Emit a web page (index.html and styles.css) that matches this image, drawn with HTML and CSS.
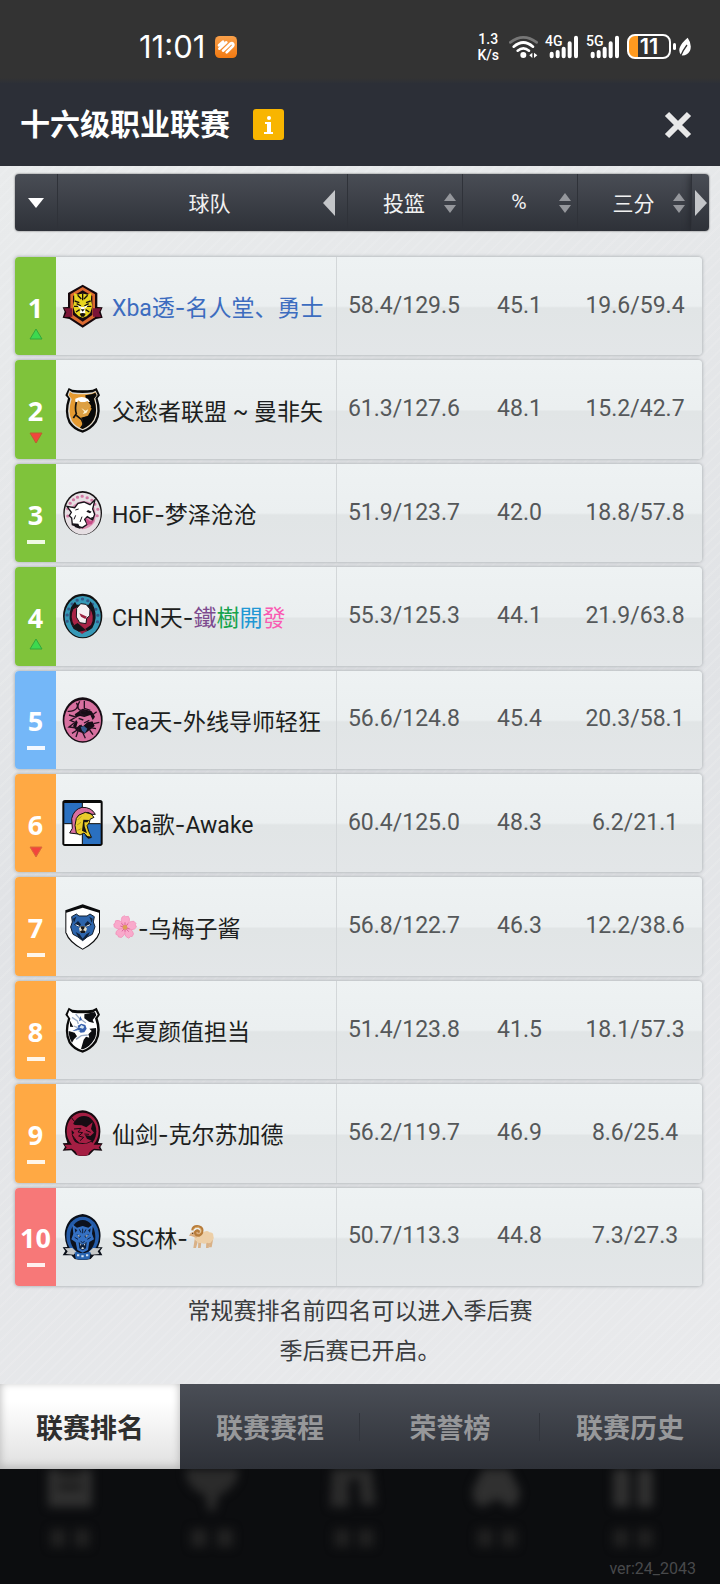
FILE: index.html
```html
<!DOCTYPE html>
<html lang="zh-CN">
<head>
    <meta charset="UTF-8">
    <meta name="viewport" content="width=device-width, initial-scale=1.0">
    <title>十六级职业联赛</title>
    <link rel="stylesheet" href="styles.css">
</head>
<body>
    <div class="status-bar">
        <div class="status-left">
            <span class="clock">11:01</span>
            <svg class="app-badge" width="22" height="22" viewBox="0 0 66 66" aria-hidden="true">
                <defs>
                    <linearGradient id="badge" x1="0" y1="0" x2="0" y2="1">
                        <stop offset="0" stop-color="#f9a04a"/>
                        <stop offset="1" stop-color="#f27a12"/>
                    </linearGradient>
                </defs>
                <rect width="66" height="66" rx="14" fill="url(#badge)"/>
                <path d="M12 28L24 17M13 38L34 19M24 44L43 26Q48 20 53 22Q57 26 53 31L35 49" fill="none" stroke="#fff" stroke-width="8" stroke-linecap="round" stroke-linejoin="round"/>
            </svg>
        </div>
        <div class="status-right">
            <span class="net-speed">1.3<br>K/s</span>
            <svg width="29" height="24" viewBox="0 0 87 72" aria-hidden="true">
                <g fill="none" stroke-linecap="round" stroke-width="8">
                    <path d="M4 22Q43-8 83 22" stroke="#777"/>
                    <path d="M14 35Q43 10 72 35" stroke="#fff"/>
                    <path d="M26 47Q43 33 60 47" stroke="#fff"/>
                </g>
                <circle cx="43" cy="60" r="9" fill="#fff"/>
                <path d="M70 53v16l-9-8zM75 53v16l10-8z" fill="#fff"/>
            </svg>
            <span class="signal">
                <span class="signal-type">4G</span>
                <svg width="34" height="24" viewBox="0 0 102 72" aria-hidden="true"><path d="M20 56v8M38 51v13M56 41v23M74 25v39M93 8v56" stroke="#fff" stroke-width="12" stroke-linecap="round"/></svg>
            </span>
            <span class="signal">
                <span class="signal-type">5G</span>
                <svg width="34" height="24" viewBox="0 0 102 72" aria-hidden="true"><path d="M20 56v8M38 51v13M56 41v23M74 25v39M93 8v56" stroke="#fff" stroke-width="12" stroke-linecap="round"/></svg>
            </span>
            <span class="battery">11</span>
            <svg width="14" height="20" viewBox="0 0 42 60" aria-hidden="true">
                <path d="M29 2Q43 22 36 41Q27 57 10 55Q0 43 6 30Q11 17 29 2Z" fill="#fff"/>
                <path d="M8 57Q16 38 27 24" stroke="#333" stroke-width="4" fill="none"/>
            </svg>
        </div>
    </div>

    <header class="title-bar">
        <h1>十六级职业联赛</h1>
        <button class="info-button" aria-label="联赛说明">
            <svg width="31" height="31" viewBox="0 0 31 31" aria-hidden="true">
                <rect width="31" height="31" rx="3" fill="#f8b500"/>
                <circle cx="16" cy="9" r="2" fill="#fff"/>
                <path d="M12 13h6v10h2v2h-9v-2h3v-8h-2z" fill="#fff"/>
            </svg>
        </button>
        <button class="close-button" aria-label="关闭">
            <svg width="28" height="28" viewBox="0 0 28 28" aria-hidden="true"><path d="M3 3L25 25M25 3L3 25" stroke="#e8e8e8" stroke-width="6"/></svg>
        </button>
    </header>

    <main>
        <table class="ranking">
            <thead>
                <tr>
                    <th class="col-rank"><button aria-label="按排名排序"><svg width="16" height="10" viewBox="0 0 16 10"><path d="M0 0h16l-8 10z" fill="#fff"/></svg></button></th>
                    <th class="col-team"><span>球队</span><button aria-label="向左"><svg width="12" height="26" viewBox="0 0 12 26"><path d="M12 0v26L0 13z" fill="#c4c6c9"/></svg></button></th>
                    <th class="col-sort"><span>投篮</span><button aria-label="按投篮排序"><svg width="12" height="20" viewBox="0 0 12 20"><path d="M0 8L6 0l6 8zM0 12h12l-6 8z" fill="#95979c"/></svg></button></th>
                    <th class="col-sort"><span>%</span><button aria-label="按命中率排序"><svg width="12" height="20" viewBox="0 0 12 20"><path d="M0 8L6 0l6 8zM0 12h12l-6 8z" fill="#95979c"/></svg></button></th>
                    <th class="col-sort"><span>三分</span><button aria-label="按三分排序"><svg width="12" height="20" viewBox="0 0 12 20"><path d="M0 8L6 0l6 8zM0 12h12l-6 8z" fill="#95979c"/></svg></button></th>
                    <th class="col-next"><button aria-label="向右"><svg width="12" height="26" viewBox="0 0 12 26"><path d="M0 0v26l12-13z" fill="#c4c6c9"/></svg></button></th>
                </tr>
            </thead>
            <tbody>
                <tr>
                    <td class="rank green"><b>1</b><svg class="move" viewBox="0 0 14 16"><path d="M7 2L13 12H1z" fill="#3dd84f" stroke="#35a63a"/></svg></td>
                    <td class="team mine">
                        <!-- tiger -->
                        <svg class="logo" viewBox="0 0 123 138" aria-hidden="true">
                            <path d="M62 5L106 30V72L122 73L116 86L122 104L102 108L62 134L22 108L2 104L8 86L2 73L18 72V30Z" fill="#15070c"/>
                            <path d="M62 12L99 34V103L62 127L25 103V34Z" fill="#dc6a31"/>
                            <path d="M62 22L91 39V96L62 116L33 96V39Z" fill="#170910"/>
                            <path d="M6 76H31V101L7 102L13 88ZM118 76H93V101L117 102L111 88Z" fill="#7c1537"/>
                            <path d="M36 30L48 35Q62 29 76 35L88 30L87 50L91 70L85 89L74 100L62 104L50 100L39 89L33 70L37 50Z" fill="#e8d51f"/>
                            <path d="M47 37L58 48M77 37L66 48M62 32V52M38 54L52 59M86 54L72 59M36 70L49 70M88 70L75 70M42 87L53 80M82 87L71 80M44 62L57 69M80 62L67 69" stroke="#17100c" stroke-width="4"/>
                            <path d="M45 66L58 71L54 76ZM79 66L66 71L70 76ZM57 72H67L70 89L62 94L54 89Z" fill="#fff"/>
                            <path d="M56 79H68L62 86ZM53 93Q62 87 71 93L66 101H58Z" fill="#17100c"/>
                        </svg>
                        <span>Xba透<span class="dash">-</span>名人堂、勇士</span>
                    </td>
                    <td class="fg">58.4/129.5</td><td class="pct">45.1</td><td class="three">19.6/59.4</td>
                </tr>
                <tr>
                    <td class="rank green"><b>2</b><svg class="move" viewBox="0 0 14 16"><path d="M1 3H13L7 13z" fill="#f2453d" stroke="#b9622f"/></svg></td>
                    <td class="team">
                        <!-- black and gold shield -->
                        <svg class="logo" viewBox="0 0 123 138" aria-hidden="true">
                            <path d="M20 3L31 8Q62 12 92 8L104 3L114 25L107 34Q121 74 104 106Q88 129 62 137Q34 130 20 108Q4 76 18 34L10 25Z" fill="#0a0a0a"/>
                            <path d="M22 10L31 16Q62 20 92 16L101 11L107 24L100 34Q113 75 98 101Q84 122 62 130Q39 123 26 104Q11 75 25 35L17 24Z" fill="#dcd9d2"/>
                            <path d="M24 15L33 20Q62 24 90 20L100 15L104 24L96 35Q109 73 95 98Q83 117 62 126Q41 119 30 102Q16 75 29 36L20 25Z" fill="#e59a31"/>
                            <path d="M70 25L91 21L100 17L104 25L96 35Q109 73 95 98Q83 117 62 126L54 122Q70 105 57 92L78 86L89 65L72 42Z" fill="#090909"/>
                            <path d="M40 35Q61 25 78 36L84 45L40 46Z" fill="#fff"/>
                            <path d="M48 40L60 48L77 42L88 58L78 66L83 77L65 90L47 83L40 65Z" fill="#dda044"/>
                            <path d="M43 45Q38 65 43 80L34 93M43 85L59 98L65 113L58 122" fill="none" stroke="#111" stroke-width="5"/>
                            <path d="M58 63L70 71L79 67L73 78L62 81L67 74Z" fill="#fff3d0"/>
                        </svg>
                        <span>父愁者联盟 ~ 曼非矢</span>
                    </td>
                    <td class="fg">61.3/127.6</td><td class="pct">48.1</td><td class="three">15.2/42.7</td>
                </tr>
                <tr>
                    <td class="rank green"><b>3</b><svg class="move wide" viewBox="0 0 20 16"><path d="M1 8H19" stroke="#effae2" stroke-width="4"/></svg></td>
                    <td class="team">
                        <!-- white wolf -->
                        <svg class="logo" viewBox="0 0 123 138" aria-hidden="true">
                            <ellipse cx="62" cy="69" rx="58" ry="66" fill="#151214"/>
                            <ellipse cx="62" cy="71" rx="54" ry="63" fill="#e6dfe3"/>
                            <path d="M24 40h1M34 29h1M46 22h1M60 19h1M75 23h1M89 31h1M98 43h1M17 56h1M17 78h1M105 77h1M107 58h1" stroke="#d27aa4" stroke-width="9" stroke-linecap="round"/>
                            <path d="M30 50Q60 20 92 42Q106 66 98 96Q84 116 62 118L30 104Z" fill="#dc8db2"/>
                            <path d="M15 49L38 53L48 40L66 36L84 44L99 29L92 57L98 73L92 90L76 80L68 88L76 103L61 113L31 104L29 84L22 77L28 67Z" fill="#fff" stroke="#17131a" stroke-width="4"/>
                            <path d="M30 100L49 101L56 117L40 112ZM78 60L89 65L84 70L73 65ZM86 83L95 80L91 91Z" fill="#17131a"/>
                            <path d="M40 60L50 57M41 76L36 88M60 80L54 96" fill="none" stroke="#17131a" stroke-width="3"/>
                            <path d="M71 83L84 94L96 91L89 103L75 104Z" fill="#c74c87"/>
                        </svg>
                        <span>HōF<span class="dash">-</span>梦泽沧沧</span>
                    </td>
                    <td class="fg">51.9/123.7</td><td class="pct">42.0</td><td class="three">18.8/57.8</td>
                </tr>
                <tr>
                    <td class="rank green"><b>4</b><svg class="move" viewBox="0 0 14 16"><path d="M7 2L13 12H1z" fill="#3dd84f" stroke="#35a63a"/></svg></td>
                    <td class="team">
                        <!-- masked knight -->
                        <svg class="logo" viewBox="0 0 123 138" aria-hidden="true">
                            <ellipse cx="62" cy="69" rx="59" ry="67" fill="#111"/>
                            <ellipse cx="62" cy="71" rx="54" ry="62" fill="#3799b7"/>
                            <path d="M20 48h1M30 33h1M45 22h1M61 18h1M77 23h1M91 34h1M101 49h1M15 66h1M15 85h1M107 67h1M106 86h1" stroke="#365a89" stroke-width="9" stroke-linecap="round"/>
                            <path d="M27 43L39 26L44 35L80 35L86 25L96 43Q108 77 91 105Q65 128 35 108Q15 80 27 43Z" fill="#141319"/>
                            <path d="M34 49L53 38L82 44Q100 69 87 96L65 111L38 99Q22 73 34 49Z" fill="#a92447"/>
                            <path d="M44 46L56 32L72 34L84 48L83 68L74 76L72 92L53 89L43 72Z" fill="#f6f0f2" stroke="#18131a" stroke-width="3"/>
                            <path d="M52 61L75 71L70 78L57 71Z" fill="#9b213f"/>
                            <path d="M31 98L56 93L75 113L60 123Z" fill="#9b213f"/>
                            <path d="M47 90L72 112L50 116L31 100Z" fill="#151319"/>
                        </svg>
                        <span>CHN天<span class="dash">-</span><i class="purple">鐵</i><i class="jade">樹</i><i class="azure">開</i><i class="pink">發</i></span>
                    </td>
                    <td class="fg">55.3/125.3</td><td class="pct">44.1</td><td class="three">21.9/63.8</td>
                </tr>
                <tr>
                    <td class="rank blue"><b>5</b><svg class="move wide" viewBox="0 0 20 16"><path d="M1 8H19" stroke="#f3f8ff" stroke-width="4"/></svg></td>
                    <td class="team">
                        <!-- pink dragon -->
                        <svg class="logo" viewBox="0 0 123 138" aria-hidden="true">
                            <ellipse cx="62" cy="69" rx="60" ry="68" fill="#160c14"/>
                            <ellipse cx="62" cy="71" rx="55" ry="62" fill="#d7709f"/>
                            <path d="M62 35L89 43L99 59L91 71L98 87L82 100L68 110L44 102L33 87L44 65L38 52Z" fill="#160d16"/>
                            <path d="M38 62L54 57L67 60L85 54L94 73L76 76L63 88L53 84L42 94L47 76Z" fill="#d7709f"/>
                            <path d="M17 43Q35 44 43 35Q50 26 43 18M53 13Q42 31 53 39L72 43M67 12V34L85 40M21 54L42 60L25 70L39 76L21 90L45 93M104 44L88 56M112 76L94 80M102 95L82 91M30 109L50 96L42 120M61 104L70 124M83 99L93 113" fill="none" stroke="#251020" stroke-width="4"/>
                            <path d="M50 64L64 69M66 78L82 70M48 91L59 84M58 40Q47 53 71 55" fill="none" stroke="#241222" stroke-width="4"/>
                            <path d="M56 90L66 87L76 95L69 109L60 101Z" fill="#36598d"/>
                        </svg>
                        <span>Tea天<span class="dash">-</span>外线导师轻狂</span>
                    </td>
                    <td class="fg">56.6/124.8</td><td class="pct">45.4</td><td class="three">20.3/58.1</td>
                </tr>
                <tr>
                    <td class="rank orange"><b>6</b><svg class="move" viewBox="0 0 14 16"><path d="M1 3H13L7 13z" fill="#f2453d" stroke="#d96c38"/></svg></td>
                    <td class="team">
                        <!-- spartan helmet -->
                        <svg class="logo" viewBox="0 0 123 138" aria-hidden="true">
                            <rect x="1" y="0" width="121" height="138" rx="8" fill="#090909"/>
                            <path d="M7 9H61V71H7ZM61 71H116V132H61Z" fill="#2a70c0"/>
                            <path d="M61 9H116V71H61ZM7 71H61V132H7Z" fill="#fff"/>
                            <path d="M7 71H116M61 9V132" stroke="#111" stroke-width="3"/>
                            <path d="M23 99L31 85L29 56Q35 28 60 22Q88 21 100 43L90 43L78 37L64 41L49 47L43 65L43 84L49 102Z" fill="#d86f9f" stroke="#151214" stroke-width="3"/>
                            <path d="M51 45L70 37L87 42L96 52L84 58L82 68L75 77L80 94L88 111L77 111L66 99L54 105L43 99L39 76L43 55Z" fill="#e9cc2a" stroke="#17140e" stroke-width="3"/>
                            <path d="M64 59L82 60L76 67L67 67L68 79L75 100L60 92ZM67 105L91 113L79 116Z" fill="#15130f"/>
                            <path d="M47 60L58 49M45 75L57 67M47 91L58 86" stroke="#9b7d20" stroke-width="2"/>
                        </svg>
                        <span>Xba歌<span class="dash">-</span>Awake</span>
                    </td>
                    <td class="fg">60.4/125.0</td><td class="pct">48.3</td><td class="three">6.2/21.1</td>
                </tr>
                <tr>
                    <td class="rank orange"><b>7</b><svg class="move wide" viewBox="0 0 20 16"><path d="M1 8H19" stroke="#fff6ea" stroke-width="4"/></svg></td>
                    <td class="team">
                        <!-- blue bear -->
                        <svg class="logo" viewBox="0 0 123 138" aria-hidden="true">
                            <path d="M62 1L114 19V86Q104 116 62 137Q20 116 10 86V19Z" fill="#090a0c"/>
                            <path d="M62 11L111 26V85Q101 113 62 134Q23 113 13 85V26Z" fill="#fff"/>
                            <path d="M29 38L43 30L51 36L75 36L84 30L97 38L94 54L99 68L91 91L77 98L62 110L48 99L33 91L26 69L31 54Z" fill="#2d65ac" stroke="#14202f" stroke-width="3"/>
                            <path d="M33 44L43 38L36 56ZM92 44L82 38L89 56ZM36 62L48 51L57 61L52 70ZM89 62L77 51L68 61L73 70ZM41 84L53 91L62 104L73 91L84 84L76 99L62 109L49 99Z" fill="#10223b"/>
                            <path d="M51 73L57 66H68L75 74L71 85H54Z" fill="#e5dec8"/>
                            <path d="M55 67H69L66 75L62 79L58 75ZM54 82L62 78L71 82L68 87H57Z" fill="#17171a"/>
                            <path d="M41 62L52 67M84 62L73 67" stroke="#fff" stroke-width="3"/>
                        </svg>
                        <svg class="emoji" viewBox="0 0 78 78" role="img" aria-label="🌸">
                            <g fill="#f9a9cb" stroke="#f28bb5" stroke-width="2">
                                <path id="petal" d="M39 40Q23 25 30 9L38 5L41 8L49 7Q60 21 39 40Z"/>
                                <use href="#petal" transform="rotate(72 39 40)"/>
                                <use href="#petal" transform="rotate(144 39 40)"/>
                                <use href="#petal" transform="rotate(216 39 40)"/>
                                <use href="#petal" transform="rotate(288 39 40)"/>
                            </g>
                            <path d="M39 25V53M25 36L53 45M30 52L48 29M28 28L50 53" stroke="#db6397" stroke-width="3"/>
                            <circle cx="39" cy="40" r="7" fill="#dba054"/>
                        </svg>
                        <span><span class="dash">-</span>乌梅子酱</span>
                    </td>
                    <td class="fg">56.8/122.7</td><td class="pct">46.3</td><td class="three">12.2/38.6</td>
                </tr>
                <tr>
                    <td class="rank orange"><b>8</b><svg class="move wide" viewBox="0 0 20 16"><path d="M1 8H19" stroke="#fff6ea" stroke-width="4"/></svg></td>
                    <td class="team">
                        <!-- black and white shield -->
                        <svg class="logo" viewBox="0 0 123 138" aria-hidden="true">
                            <path d="M20 2L31 8Q62 12 92 8L104 2L114 23L107 34Q121 74 104 106Q88 129 62 137Q34 130 20 108Q4 76 18 34L10 23Z" fill="#0a0a0a"/>
                            <path d="M22 10L31 17Q62 21 92 17L101 11L107 23L99 34Q113 75 98 101Q84 122 62 130Q39 123 26 104Q11 75 25 35L17 23Z" fill="#fff"/>
                            <path d="M67 22L99 15L103 25L92 39L96 48L81 44L67 34ZM24 41L34 60L24 59ZM20 72L38 77L45 88L36 97L30 107Q20 92 20 72ZM102 63Q105 88 94 101L84 98L79 82L89 72L82 65ZM57 126L65 98L72 89L87 94L95 100Q84 119 63 127Z" fill="#0d0e12"/>
                            <path d="M30 31L46 42L49 51M41 21L52 34L72 48M35 57L47 62M42 97L58 86L77 84" fill="none" stroke="#9bacc7" stroke-width="4"/>
                            <path d="M55 27L60 38L51 43M47 56L58 50L70 54L74 65L67 76L56 77L48 70L30 73L49 62Z" fill="#3760ae"/>
                            <path d="M58 54L67 59L63 65L52 62ZM44 68L54 70L50 76Z" fill="#d7e7f2"/>
                        </svg>
                        <span>华夏颜值担当</span>
                    </td>
                    <td class="fg">51.4/123.8</td><td class="pct">41.5</td><td class="three">18.1/57.3</td>
                </tr>
                <tr>
                    <td class="rank orange"><b>9</b><svg class="move wide" viewBox="0 0 20 16"><path d="M1 8H19" stroke="#fff6ea" stroke-width="4"/></svg></td>
                    <td class="team">
                        <!-- red dragon -->
                        <svg class="logo" viewBox="0 0 123 138" aria-hidden="true">
                            <path d="M62 1Q105 6 114 50Q118 77 108 99L122 100L115 111L121 122L96 121L82 135Q62 142 42 135L28 121L2 122L9 111L2 100L16 99Q6 76 10 50Q19 5 62 1Z" fill="#160a10"/>
                            <ellipse cx="62" cy="63" rx="48" ry="55" fill="#a51e43"/>
                            <ellipse cx="66" cy="64" rx="37" ry="46" fill="#160c13"/>
                            <path d="M7 104H28L37 95Q62 109 88 95L96 104H118L110 112L114 118L96 116Q80 125 79 134Q62 141 45 134Q44 124 29 116L10 118L14 112Z" fill="#a51e43"/>
                            <path d="M27 38L39 45L59 46L73 52L92 37L87 57L96 68L85 78L69 75L75 86L89 92L72 100L52 98L39 88L30 75L37 68L27 58Z" fill="#a51e43"/>
                            <path d="M29 23Q35 38 53 37L67 41M36 57L57 55L48 66L62 68L50 78L65 82L54 92M72 61L86 67M67 72L81 73M30 74L48 99" fill="none" stroke="#1b0a13" stroke-width="3"/>
                        </svg>
                        <span>仙剑<span class="dash">-</span>克尔苏加德</span>
                    </td>
                    <td class="fg">56.2/119.7</td><td class="pct">46.9</td><td class="three">8.6/25.4</td>
                </tr>
                <tr>
                    <td class="rank red"><b>10</b><svg class="move wide" viewBox="0 0 20 16"><path d="M1 8H19" stroke="#fff0ef" stroke-width="4"/></svg></td>
                    <td class="team">
                        <!-- blue wolf -->
                        <svg class="logo" viewBox="0 0 123 138" aria-hidden="true">
                            <path d="M62 0Q107 7 115 55Q118 80 108 100L122 100L114 111L121 124L96 124L86 135Q62 141 38 135L28 124L2 124L10 111L2 100L16 99Q6 76 9 51Q18 5 62 0Z" fill="#0a0f19"/>
                            <ellipse cx="62" cy="66" rx="49" ry="58" fill="#245caa"/>
                            <ellipse cx="62" cy="68" rx="38" ry="50" fill="#0c111d"/>
                            <path d="M31 31L45 41L62 36L79 41L93 31L90 59L96 76L82 84L78 108L62 116L46 108L41 85L28 76L34 59Z" fill="#3470c3"/>
                            <path d="M38 43L46 49L40 56ZM86 43L78 49L84 56ZM43 60L57 66L53 72ZM81 60L67 66L71 72ZM50 84L62 92L74 84L72 103L62 109L52 103Z" fill="#10213c"/>
                            <path d="M62 44V58M52 46L57 56M72 46L67 56M38 70L48 76M86 70L76 76M56 82L62 86L68 82" fill="none" stroke="#10213c" stroke-width="3"/>
                            <path d="M46 62L55 66L50 68ZM78 62L69 66L74 68ZM54 88L58 91L56 96ZM70 88L66 91L68 96ZM57 103L62 99L67 103L62 106Z" fill="#d8e1e8"/>
                            <path d="M8 103L31 102L43 113L35 122L12 120L17 112ZM116 103L93 102L81 113L89 122L112 120L107 112Z" fill="#c6c8c8"/>
                            <path d="M38 115Q62 120 86 115L83 134Q62 140 41 134Z" fill="#2864b1"/>
                            <path d="M45 124h7M58 127h7M72 124h7" stroke="#d6e2ef" stroke-width="6"/>
                        </svg>
                        <span>SSC林<span class="dash">-</span></span>
                        <svg class="emoji" viewBox="0 0 78 78" role="img" aria-label="🐏">
                            <path d="M20 46L16 72H24L29 54ZM31 52L30 72H38L40 54ZM55 52L54 72H62L65 52ZM65 47L63 70H71L75 48Z" fill="#d9b187"/>
                            <path d="M21 29Q34 20 43 26Q57 16 64 25Q77 25 76 36Q80 46 71 52Q67 61 58 56Q48 62 41 56Q29 60 26 51Q17 47 20 37Z" fill="#edcfa7"/>
                            <path d="M8 27L28 17L35 29L25 41L9 36L3 35Z" fill="#dcae80"/>
                            <path d="M13 19Q15 5 32 7Q47 11 42 26Q36 39 24 32Q17 23 28 19Q35 20 31 26" fill="none" stroke="#b77c3b" stroke-width="7"/>
                            <path d="M15 18Q18 9 31 9Q42 14 39 25" fill="none" stroke="#e0ad63" stroke-width="3"/>
                            <circle cx="14" cy="28" r="2" fill="#3b2a1e"/>
                        </svg>
                    </td>
                    <td class="fg">50.7/113.3</td><td class="pct">44.8</td><td class="three">7.3/27.3</td>
                </tr>
            </tbody>
        </table>
        <p class="note">常规赛排名前四名可以进入季后赛<br>季后赛已开启。</p>
    </main>

    <nav class="tabs">
        <button class="active">联赛排名</button>
        <button>联赛赛程</button>
        <button>荣誉榜</button>
        <button>联赛历史</button>
    </nav>

    <footer>
        <div class="dimmed-menu" aria-hidden="true">
            <svg viewBox="0 0 60 90"><path d="M8-12H52V38H8Z" fill="#303030"/><path d="M18 5H42M18 18H42" stroke="#171717" stroke-width="6"/><path d="M10 60H26V78H10ZM34 60H50V78H34Z" fill="#202020"/></svg>
            <svg viewBox="0 0 60 90"><path d="M5-12H57V8Q50 22 38 26L34 42H27L24 26Q10 22 5 8Z" fill="#2b2b2b"/><path d="M10 60H26V78H10ZM36 60H52V78H36Z" fill="#222"/></svg>
            <svg viewBox="0 0 60 90"><path d="M10-2L30-12L50 0L54 36H39L36 8L27 12V38H8Z" fill="#2b2b2b"/><path d="M12 60H28V78H12ZM36 60H52V78H36Z" fill="#202020"/></svg>
            <svg viewBox="0 0 60 90"><path d="M24-8H42L57 22Q56 38 46 38L34 30L20 38Q8 36 10 20Z" fill="#303030"/><path d="M14 60H30V78H14ZM38 60H54V78H38Z" fill="#202020"/></svg>
            <svg viewBox="0 0 60 90"><path d="M9-12H26V38H9ZM33-12H49V38H33Z" fill="#303030"/><path d="M9 60H25V78H9ZM33 60H49V78H33Z" fill="#202020"/></svg>
        </div>
        <span class="version">ver:24_2043</span>
    </footer>
</body>
</html>
```

FILE: styles.css
```css
* {
    box-sizing: border-box;
}

body {
    margin: 0;
    min-height: 100vh;
    display: flex;
    flex-direction: column;
    font-family: Roboto, "Noto Sans CJK SC", sans-serif;
    background-color: #0c0d0f;
    color: #1c1e20;
}

button {
    border: 0;
    padding: 0;
    background: none;
    font-family: inherit;
    cursor: pointer;
}

svg {
    display: block;
    flex: none;
}

/* phone status bar */
.status-bar {
    height: 83px;
    padding: 10px 28px 0 139px;
    display: flex;
    align-items: center;
    justify-content: space-between;
    background: linear-gradient(#333 94%, #2d3037);
    color: #fff;
}

.status-left,
.status-right {
    display: flex;
    align-items: center;
}

.status-left {
    gap: 10px;
}

.status-right {
    gap: 7px;
}

.clock {
    font-family: Inter, sans-serif;
    font-size: 31px;
    line-height: 32px;
}

.net-speed {
    margin-right: 3px;
    font-size: 14px;
    font-weight: 500;
    line-height: 16px;
    text-align: center;
}

.signal {
    position: relative;
}

.signal-type {
    position: absolute;
    left: 0;
    top: 0;
    font-size: 14px;
    font-weight: 500;
    line-height: 12px;
}

.battery {
    position: relative;
    width: 44px;
    height: 25px;
    border: 2px solid #fff;
    border-radius: 8px;
    background: linear-gradient(90deg, #ff9a1f 9px, transparent 9px);
    font-family: Inter, sans-serif;
    font-size: 22px;
    font-weight: 600;
    line-height: 21px;
    text-align: center;
}

.battery::after {
    content: "";
    position: absolute;
    right: -7px;
    top: 7px;
    width: 3px;
    height: 7px;
    border-radius: 2px;
    background-color: #fff;
}

/* title */
.title-bar {
    height: 83px;
    padding: 0 28px 0 20px;
    display: flex;
    align-items: center;
    background-color: #2c2f37;
}

.title-bar h1 {
    margin: 0;
    color: #fff;
    font-size: 30px;
    line-height: 40px;
}

.info-button {
    margin-left: 23px;
}

.close-button {
    margin-left: auto;
}

/* ranking table */
main {
    flex: 1;
    display: flex;
    flex-direction: column;
    padding: 8px 11px 12px 15px;
    background:
        repeating-linear-gradient(135deg, transparent 0 6px, rgba(255, 255, 255, 0.1) 6px 8px),
        linear-gradient(160deg, #e9ebec, #e1e3e6 50%, #e9eaec);
}

.ranking {
    flex: 1;
    display: flex;
    flex-direction: column;
    gap: 26px;
}

.ranking thead {
    display: block;
}

.ranking thead tr {
    display: grid;
    grid-template-columns: 42fr 290fr 115fr 115fr 114fr 18fr;
    height: 57px;
    overflow: hidden;
    border-radius: 4px;
    background: linear-gradient(#494d55, #2e3138);
    box-shadow: 0 0 2px #555;
}

.ranking th {
    display: flex;
    align-items: center;
    padding: 0;
    color: #f1f1f1;
    font-size: 21px;
    font-weight: 400;
    border-left: 1px solid #2f3239;
}

.ranking th span {
    flex: 1;
    padding-bottom: 2px;
}

.ranking th.col-rank,
.ranking th.col-next {
    justify-content: center;
}

.ranking th.col-rank {
    border-left: 0;
}

.ranking th.col-team {
    padding: 0 12px 0 38px;
}

.ranking th.col-sort {
    padding: 0 6px 0 16px;
}

.ranking th.col-next {
    box-shadow: 0 0 8px #202228;
}

.ranking tbody {
    flex: 1;
    display: flex;
    flex-direction: column;
    gap: 5px;
    margin-right: 7px;
}

.ranking tbody tr {
    flex: 1;
    min-height: 80px;
    display: grid;
    grid-template-columns: 41fr 281fr 125fr 115fr 125fr;
    border-radius: 4px;
    background: linear-gradient(#eef2f3, #ebeff0 50%, #e1e5e6 52%, #e3e6e8);
    box-shadow: 0 0 3px 1px #b9bdc0;
}

.ranking td {
    display: flex;
    align-items: center;
    justify-content: center;
    padding: 0 0 2px;
    color: #55585a;
    font-size: 23px;
    white-space: nowrap;
}

.ranking td.rank {
    flex-direction: column;
    gap: 5px;
    padding: 24px 0 0;
    border-radius: 4px 0 0 4px;
    color: #fff;
    font-family: "Noto Sans", sans-serif;
    font-size: 27px;
    line-height: 28px;
}

.move {
    width: 14px;
    height: 16px;
}

.move.wide {
    width: 20px;
}

.green {
    background-color: #7fc33b;
}

.blue {
    background-color: #74b7f8;
}

.orange {
    background-color: #ffa944;
}

.red {
    background-color: #f77878;
}

.ranking td.team {
    justify-content: flex-start;
    padding: 0 0 0 6px;
    border-right: 1px solid #d3d7d9;
    color: #1c1e20;
}

.ranking td.mine {
    color: #3c6cbf;
}

.team i {
    font-style: normal;
}

.dash {
    font-family: Inter, sans-serif;
}

.purple {
    color: #7d4a8e;
}

.jade {
    color: #16a34c;
}

.azure {
    color: #2298d4;
}

.pink {
    color: #f95ab2;
}

.logo {
    width: 41px;
    height: 46px;
    margin-right: 9px;
}

.emoji {
    width: 26px;
    height: 26px;
}

.ranking td.fg {
    padding-left: 9px;
}

.ranking td.three {
    padding-right: 9px;
}

.note {
    margin: 6px 4px 0 0;
    color: #3a3c3e;
    font-size: 23px;
    line-height: 40px;
    text-align: center;
}

/* bottom tabs */
.tabs {
    height: 85px;
    display: grid;
    grid-template-columns: repeat(4, 1fr);
    background: linear-gradient(#4a4e56, #2e3138);
}

.tabs button {
    color: #97989a;
    font-size: 27px;
    font-weight: 700;
    background: linear-gradient(#31343b, #31343b) right / 1px 28px no-repeat;
}

.tabs button:last-child {
    background: none;
}

.tabs .active {
    color: #2e2e2e;
    background: linear-gradient(#fff 20%, #e0e0e0);
    box-shadow: inset 0 -2px 8px #b5b5b5;
}

footer {
    height: 115px;
    display: flex;
    flex-direction: column;
    justify-content: space-between;
    padding-bottom: 6px;
    overflow: hidden;
}

.dimmed-menu {
    display: grid;
    grid-template-columns: repeat(5, 1fr);
    justify-items: center;
    padding-right: 16px;
}

.dimmed-menu svg {
    width: 60px;
    height: 90px;
    filter: blur(5px);
}

.version {
    padding-right: 24px;
    color: #48494b;
    font-size: 16px;
    line-height: 19px;
    text-align: right;
}
```
